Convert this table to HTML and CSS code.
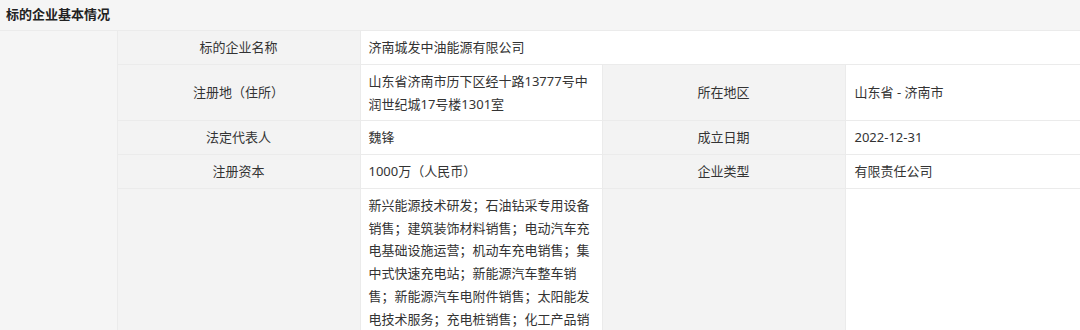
FILE: index.html
```html
<!DOCTYPE html>
<html lang="zh-CN">
<head>
<meta charset="utf-8">
<link rel="stylesheet" href="styles.css">
</head>
<body>
<div class="section">
  <div class="section-title">标的企业基本情况</div>
  <table class="info">
    <colgroup>
      <col class="c-side">
      <col class="c-label">
      <col class="c-value">
      <col class="c-label">
      <col class="c-value2">
    </colgroup>
    <tbody>
      <tr>
        <td class="side" rowspan="5"></td>
        <td class="label">标的企业名称</td>
        <td class="value" colspan="3">济南城发中油能源有限公司</td>
      </tr>
      <tr>
        <td class="label">注册地（住所）</td>
        <td class="value">山东省济南市历下区经十路13777号中润世纪城17号楼1301室</td>
        <td class="label">所在地区</td>
        <td class="value value-r">山东省 - 济南市</td>
      </tr>
      <tr>
        <td class="label">法定代表人</td>
        <td class="value">魏锋</td>
        <td class="label">成立日期</td>
        <td class="value value-r">2022-12-31</td>
      </tr>
      <tr>
        <td class="label">注册资本</td>
        <td class="value">1000万（人民币）</td>
        <td class="label">企业类型</td>
        <td class="value value-r">有限责任公司</td>
      </tr>
      <tr>
        <td class="label">经营范围</td>
        <td class="value">新兴能源技术研发；石油钻采专用设备销售；建筑装饰材料销售；电动汽车充电基础设施运营；机动车充电销售；集中式快速充电站；新能源汽车整车销售；新能源汽车电附件销售；太阳能发电技术服务；充电桩销售；化工产品销售（不含许可类化工产品）；润滑油销售；石油制品销售（不含危险化学品）；成品油仓储（不含危险化学品）；五金产品零售；日用百货销售；食品销售（仅销售预包装食品）；汽车零配件零售；洗车服务；停车场服务；广告设计、代理；广告发布；技术服务、技术开发、技术咨询、技术交流、技术转让、技术推广。（除依法须经批准的项目外，凭营业执照依法自主开展经营活动）许可项目：成品油零售（不含危险化学品）；危险化学品经营；烟草制品零售；酒类经营。（依法须经批准的项目，经相关部门批准后方可开展经营活动，具体经营项目以相关部门批准文件或许可证件为准）</td>
        <td class="label"></td>
        <td class="value value-r"></td>
      </tr>
    </tbody>
  </table>
</div>
</body>
</html>
```

FILE: styles.css
```css
html, body {
  margin: 0;
  padding: 0;
  background: #ffffff;
}

body {
  font-family: "Noto Sans", "Noto Sans CJK SC", sans-serif;
  font-size: 13px;
  color: #333333;
}

.section-title {
  height: 30px;
  line-height: 28px;
  padding-left: 6px;
  background: #f5f5f5;
  font-weight: bold;
  color: #222222;
  border-bottom: 1px solid #ebebeb;
}

.info {
  width: 1080px;
  border-collapse: collapse;
  table-layout: fixed;
}

.c-side { width: 117px; }
.c-label { width: 243px; }
.c-value { width: 242px; }
.c-value2 { width: 235px; }

.info td {
  border: 1px solid #ebebeb;
  padding: 5px 8px;
  line-height: 22.75px;
  vertical-align: middle;
  word-break: break-all;
}

.info tr:first-child td {
  border-top: none;
}

.info td.side {
  background: #f5f5f5;
  border-left: none;
  border-bottom: none;
  padding: 0;
}

.info td.label {
  background: #f3f3f3;
  text-align: center;
}

.info td.value {
  background: #ffffff;
  text-align: left;
}

.info td.value-r {
  padding-left: 9px;
  border-right: none;
}
```
